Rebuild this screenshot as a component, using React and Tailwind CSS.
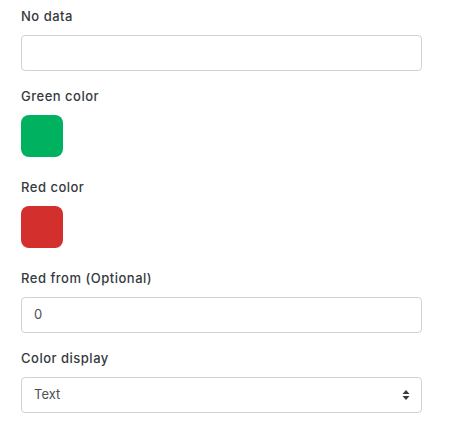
export default function App() {
  const label = "block h-5 leading-5 text-[13px] font-medium tracking-[0.5px] text-[#343a40] mb-[9px]";
  const box = "h-9 w-full rounded-[4px] border border-[#ced4da] bg-white px-3 text-[13px] text-[#495057] flex items-center";

  return (
    <div className="min-h-[444px] bg-white" style={{ fontFamily: "Inter, 'Noto Sans', sans-serif" }}>
      <div className="ml-[21px] w-[401px] pt-[6px]">
        <label className={label}>No data</label>
        <div className={box + " mb-[15px]"} />

        <label className={label}>Green color</label>
        <div className="h-[42px] w-[42px] rounded-[8px] bg-[#00b15f] mb-[20px]" />

        <label className={label}>Red color</label>
        <div className="h-[42px] w-[42px] rounded-[8px] bg-[#d32f2c] mb-[20px]" />

        <label className={label}>Red from (Optional)</label>
        <div className={box + " mb-[15px]"}>0</div>

        <label className={label}>Color display</label>
        <div className={box + " justify-between pr-[11px]"}>
          <span>Text</span>
          <svg width="8" height="12" viewBox="0 0 8 12" className="text-[#343a40]">
            <path d="M4 1 L7.5 5 H0.5 Z" fill="currentColor" />
            <path d="M4 11 L7.5 7 H0.5 Z" fill="currentColor" />
          </svg>
        </div>
      </div>
    </div>
  );
}
